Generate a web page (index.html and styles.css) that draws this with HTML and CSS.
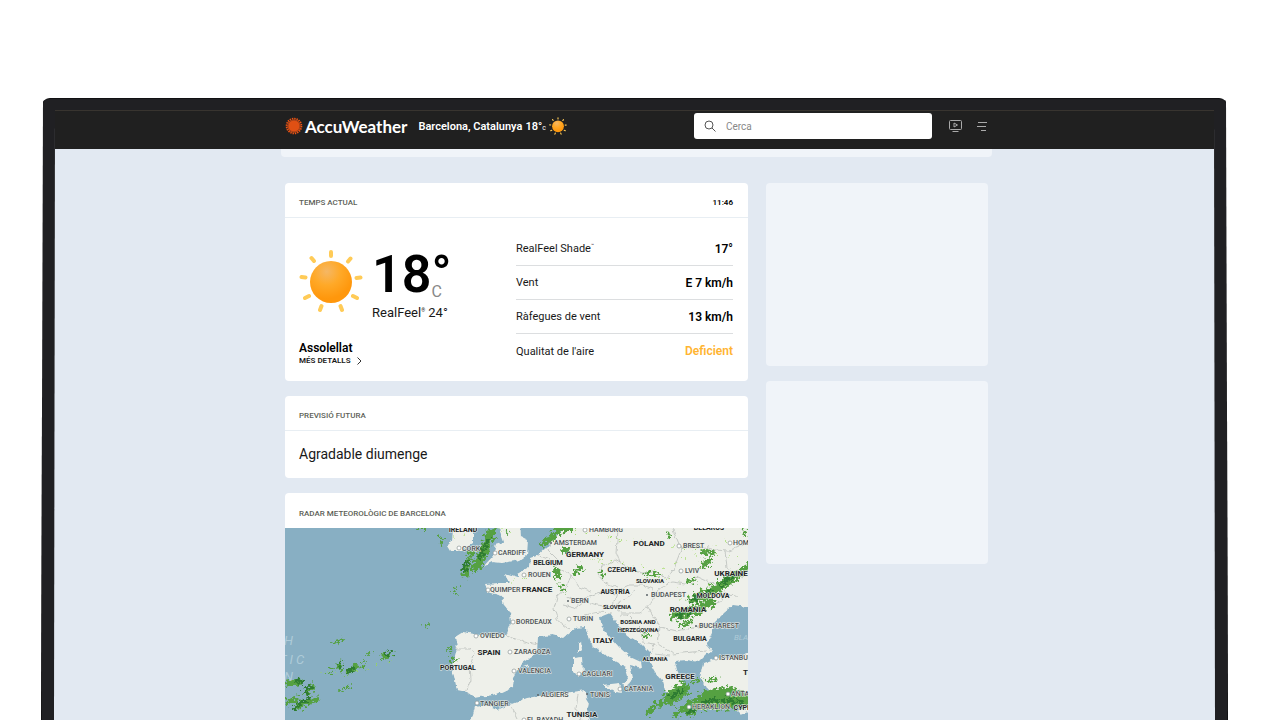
FILE: index.html
```html
<!DOCTYPE html>
<html lang="ca">
<head>
<meta charset="utf-8">
<meta name="viewport" content="width=device-width, initial-scale=1">
<title>AccuWeather - Barcelona</title>
<link rel="stylesheet" href="styles.css">
</head>
<body>
<svg class="defs" width="0" height="0" aria-hidden="true">
  <defs>
    <radialGradient id="sunFill" cx="40%" cy="25%" r="65%">
      <stop offset="0" stop-color="#f5b765"/>
      <stop offset="0.5" stop-color="#ffa928"/>
      <stop offset="1" stop-color="#ff970c"/>
    </radialGradient>
    <symbol id="sun" viewBox="0 0 64 64">
      <g stroke="#ffcb57" stroke-width="4" stroke-linecap="round">
        <path d="M32 3v4M51.500 9.500l-2.500 3M61.500 28.500l-4 .5M58 49l-4-2M43 61l-1.500-4M21 61l1.500-4M6 49l4-2M2.500 28l4 .5M12.500 9l2.500 3"/>
      </g>
      <circle cx="32" cy="33" r="21" fill="url(#sunFill)"/>
    </symbol>
  </defs>
</svg>
<div class="device">
  <div class="screen">
    <header class="topbar">
      <div class="topbar-inner">
        <a class="brand" href="#">
          <svg class="brand-mark" viewBox="0 0 18 18" aria-hidden="true">
            <circle cx="9" cy="9" r="7.400" fill="none" stroke="#f05514" stroke-width="1.800" stroke-dasharray="1.400 0.924"/>
            <circle cx="9" cy="9" r="6.600" fill="#df5014"/>
            <circle cx="9" cy="9" r="5.900" fill="none" stroke="#8d3b1b" stroke-width="0.700"/>
          </svg>
          <span>AccuWeather</span>
        </a>
        <a class="place" href="#">
          <span>Barcelona, Catalunya</span>
          <span class="place-temp">18°<small>c</small></span>
          <svg class="place-sun" aria-hidden="true"><use href="#sun"/></svg>
        </a>
        <label class="search">
          <svg viewBox="0 0 12 12" aria-hidden="true"><circle cx="5" cy="5" r="4"/><path d="M8 8l3.500 3.500"/></svg>
          <input type="text" placeholder="Cerca" aria-label="Cerca">
        </label>
        <button class="icon-button" aria-label="Vídeo">
          <svg width="13" height="12" viewBox="0 0 13 12"><rect x=".5" y=".5" width="12" height="9" rx="1"/><path d="M5 3v4l3.500-2zM3.500 11.500h6"/></svg>
        </button>
        <button class="icon-button" aria-label="Menú">
          <svg width="10" height="9" viewBox="0 0 10 9"><path d="M1 .5h9M0 4.500h9M4 8.500h5"/></svg>
        </button>
      </div>
    </header>
    <div class="promo"></div>
    <div class="content">
      <main class="column">
        <section class="card">
          <div class="card-head"><h2>TEMPS ACTUAL</h2><time>11:46</time></div>
          <div class="current">
            <div class="now">
              <div class="reading">
                <svg class="sun" aria-hidden="true"><use href="#sun"/></svg>
                <div>
                  <div class="temp"><span>18</span><div class="temp-side"><span>°</span><span class="unit">C</span></div></div>
                  <div class="feel">RealFeel<sup>®</sup> 24°</div>
                </div>
              </div>
              <div class="phrase">Assolellat</div>
              <a class="more" href="#">MÉS DETALLS
                <svg width="5" height="8" viewBox="0 0 5 8" aria-hidden="true"><path d="M.5 .5L4 4 .5 7.500"/></svg></a>
            </div>
            <dl class="details">
              <div><dt>RealFeel Shade<sup>™</sup></dt><dd>17°</dd></div>
              <div><dt>Vent</dt><dd>E 7 km/h</dd></div>
              <div><dt>Ràfegues de vent</dt><dd>13 km/h</dd></div>
              <div><dt>Qualitat de l'aire</dt><dd class="poor">Deficient</dd></div>
            </dl>
          </div>
        </section>
        <section class="card">
          <div class="card-head"><h2>PREVISIÓ FUTURA</h2></div>
          <p class="outlook">Agradable diumenge</p>
        </section>
        <section class="card">
          <div class="card-head radar-head"><h2>RADAR METEOROLÒGIC DE BARCELONA</h2></div>
          <svg class="map" viewBox="285 528 463 193" role="img" aria-label="Mapa del radar">
            <defs>
              <filter id="coast" x="-5%" y="-5%" width="110%" height="110%"><feTurbulence type="fractalNoise" baseFrequency="0.18" numOctaves="2" seed="4"/><feDisplacementMap in="SourceGraphic" scale="5" xChannelSelector="R" yChannelSelector="G"/></filter>
              <filter id="scatter" x="-20%" y="-20%" width="140%" height="140%"><feTurbulence type="fractalNoise" baseFrequency="0.3" numOctaves="3" seed="9"/><feDisplacementMap in="SourceGraphic" scale="12" xChannelSelector="R" yChannelSelector="G"/></filter>
            </defs>
            <rect x="285" y="528" width="463" height="193" fill="#88afc3"/>
            <g fill="#eef0ea" filter="url(#coast)">
              <path d="M455 520H473V543L462 551 450 551 447 546 453 540z"/>
              <path d="M495 520L501 534 504 542 494 545 497 549 492 557 484 566 492 562 502 563 520 560 527 555 528 540 520 536 519 520z"/>
              <path d="M563 518L561 532 552 540 547 547 538 555 530 558 529 567 518 573 518 577 505 573 507 580 510 583 498 583 485 584 488 592 502 596 504 605 510 612 511 623 506 636 480 635 463 632 455 637 457 648 452 667 457 690 467 692 475 698 497 694 512 687 513 677 522 663 537 653 538 637 552 635 563 638 575 628 585 627 590 643 603 653 617 663 625 667 628 677 622 685 627 686 633 678 630 665 642 668 641 662 630 657 620 648 610 637 602 627 600 617 610 613 615 620 627 635 640 643 650 653 650 663 655 672 662 680 665 691 675 695 675 687 687 688 682 680 677 670 675 661 687 660 698 662 707 653 713 652 707 645 713 633 713 623 723 613 733 605 755 608V518z"/>
              <path d="M703 663L717 658 737 657 755 651V695L737 690 718 697 707 690 700 677z"/>
              <path d="M602 685L620 683 622 693 615 692z"/>
              <path d="M573 658L582 657 583 673 577 677 573 673zM578 643L581 641 582 650 578 654z"/>
              <path d="M470 725L475 707 485 705 497 710 509 705 527 698 557 693 573 692 585 690 586 698 589 703 587 712 592 725z"/>
              <path d="M686 705l13 1-1 3-12-1zM737 711l9-4 3 5-8 3zM524 666l5-2-2 3z"/>
            </g>
            <g fill="none" stroke="#b3b8b5" stroke-width=".7" filter="url(#coast)">
              <path d="M456 649l14 0 4 5-4 12 1 14-5 13M506 635l12 5 10 3 10 2M538 555l12 5 8 8 13 7-4 12-10 9-3 13 4 12 12 9M552 541l-4 9 10 10M567 597l10 4 15-5 12-4 12 2M563 605l12 3 9-7 13 4 15 2 13-8 11-10M571 575l8 12 11 4M604 565l11-5 12 7 14 6 15-1 10 6M604 565l-6 10 7 8 13 5M618 530l-2 22 4 11M618 590l11-5 14 0 10 4M618 590l-5 15 9 8 17 0 9-7 12-18 12-6 14 2M673 530l8 20-7 18-7 12M648 607l12 20 17 4 16-3 18-3M660 627l-2 17 15 10 20-2 14-1M620 615l8 0 13 13 1 14 13 2M655 644l-4 11M655 654l15 2M680 549l18-4 17 5 13 1 20-8M725 551l2 17 15 10M690 584l8-7 18 8 7 16-11 4M710 587l13 5 14 5M578 694l-2 15 6 10M511 707l6 12M585 615l14-3 13 1"/>
            </g>
            <g filter="url(#scatter)" stroke-linecap="round" fill="none">
              <g stroke="#55a142">
                <path stroke-width="5" d="M287 683l14-1M307 693l6-7M287 702l10-3M296 708l20-9M348 672l9-6M340 663v6M390 655l-6 2"/>
                <path stroke-width="2" d="M332 644l12-5M328 674l6-5M367 656l4-4M362 668l3-7M424 627l5-3M417 528h10M340 690l10-3M440 542l3 3M448 652l4-4"/>
                <path stroke-width="9" d="M491 532l-4 12-6 14-6 10"/><path stroke-width="5" d="M471 553l-6 22"/><path stroke-width="2" d="M458 588l-4 5M443 539l-5-2M508 529l-3 3"/>
                <path stroke-width="6" d="M562 529l-11 9-8 6M557 570l1 6M577 571l3-2M557 528h16M564 551h3"/>
                <path stroke-width="3" d="M560 585l4 7M600 571l3 5M645 574l14 1M644 634l4 2M668 534l2 2M452 663l4-5"/>
                <path stroke-width="9" d="M675 615l20-4 16-9M692 600l20-9 14-9 11-7"/>
                <path stroke-width="6" d="M703 566l7-5M704 552l8 1M742 570l8-4"/>
                <path stroke-width="3" d="M675 611l-4 6M680 626l12-4M733 582l8-10M742 528l4 7M687 582l8-3"/>
                <path stroke-width="13" d="M670 698l13-9M690 709l18-12 20-4 20 7M700 704l46-2"/>
                <path stroke-width="5" d="M654 707l-6 6M675 716l10-9M664 702l-9 4"/><path stroke-width="3" d="M690 683l8-3M707 681l9-2"/>
              </g>
              <g stroke="#2d7b32">
                <path stroke-width="4" d="M297 680l5 3M306 692l5-6M300 703l9-4M294 708l3-1M352 669l-4 3M340 663v2M388 654l2-1"/>
                <path stroke-width="4" d="M488 540l-8 18M467 562l-3 8M678 615l14-5M691 600l20-8M721 585l12-8M688 712l20-9M709 700l33 2M671 697l11-6"/>
              </g>
              <g stroke="#98d957" stroke-width="1.500" stroke-dasharray="0 11"><path d="M565 531l55 8 60 9 60 10M572 552l70 20 55 15M600 560l60 10 70-30M455 538l20-8M500 530l20 8M325 673l25 1 40-12M515 580l18-5M680 600l65-25"/></g>
            </g>
            <g class="sea"><text x="284" y="645">H</text><text x="279" y="664">T I C</text><text x="284" y="681">N</text><text class="small-sea" x="734" y="640">BLACK</text></g>
            <g fill="#fff" stroke="#8d9697" stroke-width=".7">
              <circle cx="459" cy="548" r="2"/><circle cx="495" cy="553" r="2"/><circle cx="585" cy="530" r="2"/><circle cx="524" cy="575" r="2"/><circle cx="488" cy="590" r="2"/><circle cx="513" cy="622" r="2"/><circle cx="569" cy="619" r="2"/><circle cx="476" cy="636" r="2"/><circle cx="510" cy="652" r="2"/><circle cx="514" cy="671" r="2"/><circle cx="477" cy="703" r="2"/><circle cx="579" cy="674" r="2"/><circle cx="620" cy="689" r="2"/><circle cx="679" cy="546" r="2"/><circle cx="730" cy="543" r="2"/><circle cx="681" cy="571" r="2"/><circle cx="716" cy="658" r="2"/><circle cx="728" cy="694" r="2"/><circle cx="689" cy="707" r="2"/><circle cx="524" cy="720" r="2"/>
            </g>
            <g fill="#5b6568"><circle cx="551" cy="543" r="1"/><circle cx="568" cy="601" r="1"/><circle cx="647" cy="595" r="1"/><circle cx="696" cy="626" r="1"/><circle cx="538" cy="695" r="1"/><circle cx="587" cy="694" r="1"/></g>
            <g class="cities">
              <text x="462" y="551">CORK</text><text x="498" y="555">CARDIFF</text><text x="589" y="532">HAMBURG</text><text x="554" y="545">AMSTERDAM</text><text x="528" y="577">ROUEN</text><text x="490" y="592">QUIMPER</text><text x="516" y="624">BORDEAUX</text><text x="571" y="603">BERN</text><text x="573" y="621">TURIN</text><text x="480" y="638">OVIEDO</text><text x="514" y="654">ZARAGOZA</text><text x="518" y="673">VALENCIA</text><text x="541" y="697">ALGIERS</text><text x="480" y="706">TANGIER</text><text x="582" y="676">CAGLIARI</text><text x="590" y="697">TUNIS</text><text x="624" y="691">CATANIA</text><text x="683" y="548">BREST</text><text x="733" y="545">HOMEL</text><text x="685" y="573">LVIV</text><text x="651" y="597">BUDAPEST</text><text x="699" y="628">BUCHAREST</text><text x="719" y="660">ISTANBUL</text><text x="731" y="696">ANTALYA</text><text x="692" y="709">HERAKLION</text><text x="527" y="722">EL BAYADH</text>
            </g>
            <g class="countries">
              <text x="463" y="532">IRELAND</text><text x="649" y="546" class="large">POLAND</text><text x="709" y="530">BELARUS</text><text x="585" y="557" class="large">GERMANY</text><text x="548" y="565">BELGIUM</text><text x="537" y="592" class="large">FRANCE</text><text x="622" y="572">CZECHIA</text><text x="650" y="583" class="small">SLOVAKIA</text><text x="615" y="594">AUSTRIA</text><text x="617" y="609" class="small">SLOVENIA</text><text x="731" y="576" class="large">UKRAINE</text><text x="713" y="598">MOLDOVA</text><text x="688" y="612" class="large">ROMANIA</text><text x="638" y="624" class="small">BOSNIA AND</text><text x="638" y="632" class="small">HERZEGOVINA</text><text x="690" y="641">BULGARIA</text><text x="603" y="643" class="large">ITALY</text><text x="489" y="655" class="large">SPAIN</text><text x="458" y="670">PORTUGAL</text><text x="655" y="661" class="small">ALBANIA</text><text x="680" y="679" class="large">GREECE</text><text x="758" y="675" class="large">TURKEY</text><text x="747" y="710">CYPRUS</text><text x="582" y="717" class="large">TUNISIA</text>
            </g>
          </svg>
        </section>
      </main>
      <aside class="rail"><div class="slot"></div><div class="slot"></div></aside>
    </div>
  </div>
</div>
</body>
</html>
```
FILE: styles.css
```css
* { box-sizing: border-box; }
body {
  margin: 0;
  padding: 98px 52px 0 41px;
  background: #fff;
  color: #191919;
  font-family: Roboto, "Liberation Sans", sans-serif;
}
a { color: inherit; text-decoration: none; }
h2, p, dl, dd { margin: 0; }
.defs { position: absolute; }

.device {
  min-height: calc(100vh - 98px);
  padding: 11px 12px 0;
  background: #202023;
  border: solid #111113;
  border-width: 1px 1px 0;
  border-radius: 9px 9px 0 0;
  clip-path: polygon(2px 0, calc(100% - 2px) 0, 100% 100%, 0 100%);
}
.screen {
  min-height: calc(100vh - 110px);
  background: #e2e9f2;
  clip-path: polygon(1px 0, calc(100% - 1px) 0, 100% 100%, 0 100%);
}
.topbar {
  padding-left: 4px;
  background: #202020;
  border-top: 1px solid #38342f;
}
.topbar-inner {
  display: flex;
  align-items: center;
  max-width: 703px;
  height: 38px;
  margin: 0 auto;
  padding: 0 1px 8px 0;
  color: #fff;
}
.brand { display: flex; align-items: center; gap: 2px; font: 700 17px Lato, sans-serif; }
.brand-mark { width: 18px; height: 18px; }
.place {
  display: flex;
  align-items: center;
  gap: 3px;
  margin-left: 11px;
  font-size: 11px;
  font-weight: 600;
}
.place small { font-size: 7px; font-weight: 400; }
.place-sun { width: 18px; height: 18px; }
.search {
  display: flex;
  align-items: center;
  gap: 10px;
  width: 238px;
  height: 26px;
  margin-left: auto;
  margin-right: 17px;
  padding: 0 10px;
  background: #fff;
  border-radius: 3px;
}
.search svg { width: 12px; height: 12px; fill: none; stroke: #555; }
.search input {
  flex: 1;
  min-width: 0;
  padding: 0;
  border: 0;
  outline: 0;
  background: none;
  font: 10px Roboto, sans-serif;
}
.search input::placeholder { color: #888; opacity: 1; }
.icon-button { display: flex; padding: 0; border: 0; background: none; }
.icon-button + .icon-button { margin-left: 15px; }
.icon-button svg { fill: none; stroke: #aaa; }

.promo {
  max-width: 711px;
  height: 8px;
  margin: 0 auto;
  background: #f0f4f9;
  border-radius: 0 0 4px 4px;
  position: relative;
  left: 2px;
}
.content {
  display: flex;
  gap: 18px;
  max-width: 707px;
  margin: 0 auto;
  padding: 26px 0 0 4px;
}
.column, .rail { display: flex; flex-direction: column; gap: 15px; }
.column { flex: 463; min-width: 0; }
.rail { flex: 222; }
.slot { height: 183px; background: #f0f4f9; border-radius: 4px; }
.card { overflow: hidden; background: #fff; border-radius: 4px; }
.card:last-child { border-radius: 4px 4px 0 0; }
.card-head {
  display: flex;
  align-items: center;
  justify-content: space-between;
  height: 35px;
  padding: 5px 15px 0 14px;
  border-bottom: 1px solid #e8eef3;
}
.card-head h2 { color: #5d5f58; font-size: 8px; font-weight: 500; }
.card-head time { font-size: 8px; font-weight: 600; color: #000; }
.current {
  display: flex;
  justify-content: space-between;
  padding: 14px 15px 13px 14px;
}
.reading { display: flex; gap: 9px; padding-top: 14px; }
.sun { width: 64px; height: 64px; margin-top: 3px; }
.temp {
  display: flex;
  align-items: center;
  height: 58px;
  color: #000;
  font-size: 52px;
  font-weight: 600;
  line-height: 56px;
}
.temp-side {
  display: flex;
  flex-direction: column;
  height: 56px;
}
.temp-side > :first-child { height: 35px; }
.temp .unit { color: #888; font-size: 16px; font-weight: 400; line-height: 20px; }
.feel { font-size: 13px; line-height: 18px; }
sup { font-size: 5px; line-height: 0; vertical-align: 5px; }
.phrase { margin-top: 19px; color: #000; font-size: 12px; font-weight: 600; line-height: 14px; }
.more { display: flex; align-items: center; gap: 6px; font-size: 8px; font-weight: 600; line-height: 12px; }
.more svg { fill: none; stroke: #333; }
.details { width: 217px; }
.details div {
  display: flex;
  align-items: center;
  justify-content: space-between;
  height: 34px;
  border-bottom: 1px solid #dcdee0;
}
.details div:last-child { border-bottom: 0; }
.details dt { font-size: 11px; }
.details dd { color: #000; font-size: 12px; font-weight: 600; }
.details .poor { color: #ffb431; }
.outlook { padding: 13px 14px; font-size: 14px; line-height: 21px; }
.radar-head { border-bottom: 0; }

.map { display: block; width: 100%; }
.map text { font-family: Roboto, sans-serif; paint-order: stroke; stroke: #eef0ea; stroke-width: 1px; }
.map .cities text { font-size: 7px; font-weight: 500; fill: #4a5154; }
.map .countries text { font-size: 7px; font-weight: 700; fill: #202426; text-anchor: middle; }
.map .countries .large { font-size: 8px; }
.map .countries .small { font-size: 6px; }
.map .sea text { font-size: 13px; font-style: italic; fill: #aecbd8; stroke: none; }
.map .sea .small-sea { font-size: 8px; }
```
